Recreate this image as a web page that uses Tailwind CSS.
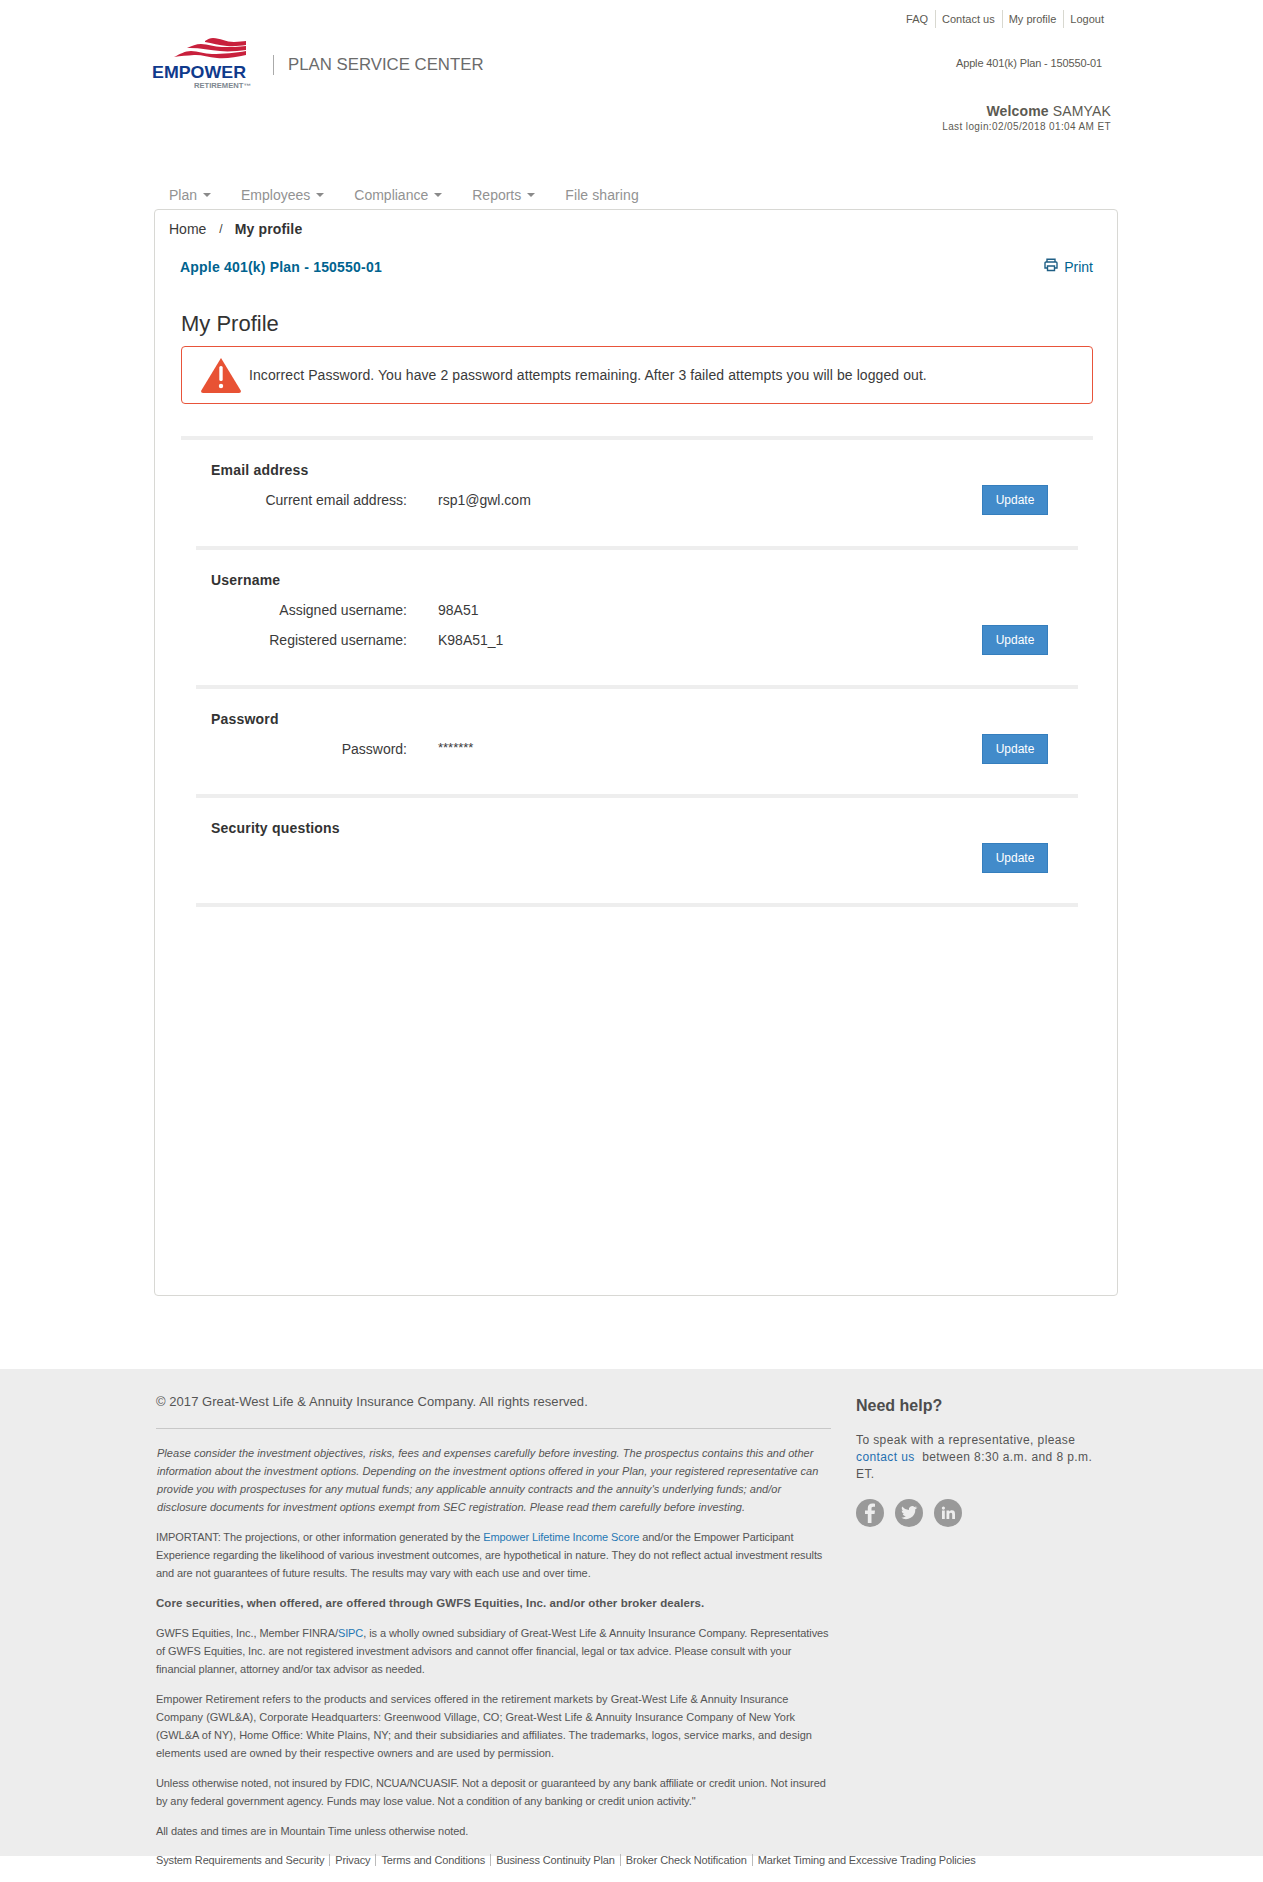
<!DOCTYPE html>
<html lang="en"><head><meta charset="utf-8"><title>My Profile</title>
<script src="https://cdn.jsdelivr.net/npm/@tailwindcss/browser@4"></script></head>
<body class="bg-white font-['Liberation_Sans',Arial,sans-serif] text-[14px] text-[#3a3a3a]">
<div class="h-[1882px] flex flex-col overflow-hidden">
<header class="ml-[152px] w-[960px] h-[188px] shrink-0">
  <div class="flex justify-end pt-[10px] pr-[8px] text-[11px] text-[#5c5a52] leading-[18px]">
    <a class="pr-[7px]">FAQ</a><a class="pl-[6px] pr-[7px] border-l border-[#d8d8d0]">Contact us</a><a class="pl-[6px] pr-[7px] border-l border-[#d8d8d0]">My profile</a><a class="pl-[6px] border-l border-[#d8d8d0]">Logout</a>
  </div>
  <div class="flex justify-between">
    <div class="flex items-start pt-[8px]">
      <svg width="100" height="56" viewBox="0 0 100 56">
        <path d="M53 5 C56 3 58 2 61 2 C68 2 74 6 82 6 C87 6 91 5 94 5 V9 C88 10 82 10.500 75 10 C67 9.500 60 7 53 6Z" fill="#c8203c"/>
        <path d="M35 12 C40 10 44 8 49 8 C56 8 62 11 70 11 C78 11 87 11 94 10 V14 C86 15 76 16 68 15 C58 14 46 11.500 35 12Z" fill="#c8203c"/>
        <path d="M22 21 C28 18 33 15 39 15 C46 15 52 18 60 18 C71 18 84 17 94 15 V19 C84 21 74 23 65 22 C56 21 49 18.500 42 19 C35 19.500 29 20 22 21Z" fill="#c8203c"/>
        <text x="0" y="42" font-family="Liberation Sans" font-weight="700" font-size="16.5" fill="#0f3a8c" textLength="94" lengthAdjust="spacingAndGlyphs">EMPOWER</text>
        <text x="42" y="52" font-family="Liberation Sans" font-weight="700" font-size="6.5" fill="#7d8790" textLength="57" lengthAdjust="spacingAndGlyphs">RETIREMENT™</text>
      </svg>
      <div class="ml-[21px] mt-[19px] h-[20px] border-l border-[#aaa]"></div>
      <div class="ml-[14px] mt-[17px] text-[16.8px] leading-[24px] text-[#6b6b6b]">PLAN SERVICE CENTER</div>
    </div>
    <div class="text-right pt-[28px] pr-[1px] text-[#5c5a52]">
      <div class="text-[11px] leading-[14px] pr-[9px] tracking-[-0.13px]">Apple 401(k) Plan - 150550-01</div>
      <div class="mt-[32px] text-[14px] leading-[18px] tracking-[0.15px]"><b>Welcome</b> SAMYAK</div>
      <div class="text-[10px] leading-[14px] tracking-[0.38px]">Last login:02/05/2018 01:04 AM ET</div>
    </div>
  </div>
</header>
<nav class="ml-[169px] flex gap-[30px] h-[21px] items-start text-[14px] leading-[14px] text-[#929292] shrink-0">
  <a class="flex items-center gap-[6px]">Plan<span class="border-x-[4px] border-x-transparent border-t-[4px] border-t-[#8a8a8a]"></span></a>
  <a class="flex items-center gap-[6px]">Employees<span class="border-x-[4px] border-x-transparent border-t-[4px] border-t-[#8a8a8a]"></span></a>
  <a class="flex items-center gap-[6px]">Compliance<span class="border-x-[4px] border-x-transparent border-t-[4px] border-t-[#8a8a8a]"></span></a>
  <a class="flex items-center gap-[6px]">Reports<span class="border-x-[4px] border-x-transparent border-t-[4px] border-t-[#8a8a8a]"></span></a>
  <a class="tracking-[0.1px]">File sharing</a>
</nav>
<main class="ml-[154px] w-[964px] h-[1087px] shrink-0 border border-[#d8d8d4] rounded-[4px] pl-[26px] pr-[24px]">
  <div class="-ml-[12px] flex items-center h-[38px] text-[14px]"><span>Home</span><span class="ml-[13px] mr-[12px] text-[12px]">/</span><b class="tracking-[0.15px] text-[#333]">My profile</b></div>
  <div class="flex justify-between items-center mt-[9px] h-[20px]">
    <b class="text-[#00638f] tracking-[0.2px] -ml-[1px]">Apple 401(k) Plan - 150550-01</b>
    <a class="flex items-center gap-[6px] text-[#00638f]">
      <svg width="14" height="14" viewBox="0 0 14 14" fill="none" stroke="#1f5f85" stroke-width="1.4" class="-mt-[4px]"><path d="M3 4V1.200h8V4M3 10H1V5a1 1 0 0 1 1-1h10a1 1 0 0 1 1 1v5h-2"/><path d="M3.500 8h7v4.500h-7z"/></svg>
      Print</a>
  </div>
  <h1 class="mt-[32px] text-[22px] leading-[30px] text-[#333]">My Profile</h1>
  <div class="mt-[7px] h-[58px] border border-[#e8543a] rounded-[4px] flex items-center pl-[18px] text-[14px] tracking-[0.08px]">
    <svg width="42" height="36" viewBox="0 0 42 36" class="mr-[7px]"><path d="M21 1 L41 34 Q41 36 39 36 H3 Q1 36 1 34Z" fill="#e85234"/><rect x="19.300" y="9" width="3.400" height="15" rx="1.500" fill="#fff"/><circle cx="21" cy="29" r="2.200" fill="#fff"/></svg>
    <span>Incorrect Password. You have 2 password attempts remaining. After 3 failed attempts you will be logged out.</span>
  </div>

  <div class="mt-[32px] h-[4px] bg-[#eeeeee]"></div>
  <section class="mx-[15px] px-[15px] h-[106px] relative">
    <h2 class="pt-[20px] font-bold leading-[20px] tracking-[0.2px] text-[#333]">Email address</h2>
    <div class="flex mt-[10px] leading-[20px]"><span class="w-[196px] text-right">Current email address:</span><span class="ml-[31px]">rsp1@gwl.com</span></div>
    <button class="absolute right-[30px] top-[45px] w-[66px] h-[30px] bg-[#428bca] border border-[#357ebd] text-white text-[12px]">Update</button>
  </section>
  <div class="mx-[15px] h-[4px] bg-[#eeeeee]"></div>
  <section class="mx-[15px] px-[15px] h-[135px] relative">
    <h2 class="pt-[20px] font-bold leading-[20px] tracking-[0.2px] text-[#333]">Username</h2>
    <div class="flex mt-[10px] leading-[20px]"><span class="w-[196px] text-right">Assigned username:</span><span class="ml-[31px]">98A51</span></div>
    <div class="flex mt-[10px] leading-[20px]"><span class="w-[196px] text-right">Registered username:</span><span class="ml-[31px]">K98A51_1</span></div>
    <button class="absolute right-[30px] top-[75px] w-[66px] h-[30px] bg-[#428bca] border border-[#357ebd] text-white text-[12px]">Update</button>
  </section>
  <div class="mx-[15px] h-[4px] bg-[#eeeeee]"></div>
  <section class="mx-[15px] px-[15px] h-[105px] relative">
    <h2 class="pt-[20px] font-bold leading-[20px] tracking-[0.2px] text-[#333]">Password</h2>
    <div class="flex mt-[10px] leading-[20px]"><span class="w-[196px] text-right">Password:</span><span class="ml-[31px] text-[13px] -mt-[1px]">*******</span></div>
    <button class="absolute right-[30px] top-[45px] w-[66px] h-[30px] bg-[#428bca] border border-[#357ebd] text-white text-[12px]">Update</button>
  </section>
  <div class="mx-[15px] h-[4px] bg-[#eeeeee]"></div>
  <section class="mx-[15px] px-[15px] h-[105px] relative">
    <h2 class="pt-[20px] font-bold leading-[20px] tracking-[0.2px] text-[#333]">Security questions</h2>
    <button class="absolute right-[30px] top-[45px] w-[66px] h-[30px] bg-[#428bca] border border-[#357ebd] text-white text-[12px]">Update</button>
  </section>
  <div class="mx-[15px] h-[4px] bg-[#eeeeee]"></div>
</main>
<footer class="mt-[73px] bg-[#ededed] h-[487px] shrink-0 pl-[156px] flex text-[#555]">
  <div class="w-[675px]">
    <p class="pt-[24px] text-[13px] leading-[18px] tracking-[0.05px]">© 2017 Great-West Life &amp; Annuity Insurance Company. All rights reserved.</p>
    <div class="mt-[17px] border-t border-[#c8c8c8]"></div>
    <div class="mt-[15px] text-[11px] leading-[18px] text-[#555] whitespace-nowrap">
      <p class="italic pl-[1px] tracking-[0.03px]">Please consider the investment objectives, risks, fees and expenses carefully before investing. The prospectus contains this and other<br>information about the investment options. Depending on the investment options offered in your Plan, your registered representative can<br>provide you with prospectuses for any mutual funds; any applicable annuity contracts and the annuity's underlying funds; and/or<br>disclosure documents for investment options exempt from SEC registration. Please read them carefully before investing.</p>
      <p class="mt-[12px] tracking-[-0.1px]">IMPORTANT: The projections, or other information generated by the <a class="text-[#1f78b4]">Empower Lifetime Income Score</a> and/or the Empower Participant<br>Experience regarding the likelihood of various investment outcomes, are hypothetical in nature. They do not reflect actual investment results<br>and are not guarantees of future results. The results may vary with each use and over time.</p>
      <p class="mt-[12px] font-bold text-[11.5px] tracking-[0.07px]">Core securities, when offered, are offered through GWFS Equities, Inc. and/or other broker dealers.</p>
      <p class="mt-[12px] tracking-[-0.08px]">GWFS Equities, Inc., Member FINRA/<a class="text-[#1f78b4]">SIPC</a>, is a wholly owned subsidiary of Great-West Life &amp; Annuity Insurance Company. Representatives<br>of GWFS Equities, Inc. are not registered investment advisors and cannot offer financial, legal or tax advice. Please consult with your<br>financial planner, attorney and/or tax advisor as needed.</p>
      <p class="mt-[12px]">Empower Retirement refers to the products and services offered in the retirement markets by Great-West Life &amp; Annuity Insurance<br>Company (GWL&amp;A), Corporate Headquarters: Greenwood Village, CO; Great-West Life &amp; Annuity Insurance Company of New York<br>(GWL&amp;A of NY), Home Office: White Plains, NY; and their subsidiaries and affiliates. The trademarks, logos, service marks, and design<br>elements used are owned by their respective owners and are used by permission.</p>
      <p class="mt-[12px] tracking-[-0.1px]">Unless otherwise noted, not insured by FDIC, NCUA/NCUASIF. Not a deposit or guaranteed by any bank affiliate or credit union. Not insured<br>by any federal government agency. Funds may lose value. Not a condition of any banking or credit union activity."</p>
      <p class="mt-[12px] tracking-[-0.08px]">All dates and times are in Mountain Time unless otherwise noted.</p>
    </div>
  </div>
  <aside class="ml-[25px] w-[260px]">
    <h3 class="pt-[26px] text-[16px] leading-[22px] font-bold text-[#4d4d4d]">Need help?</h3>
    <p class="mt-[15px] text-[12px] leading-[17px] tracking-[0.4px]">To speak with a representative, please<br><a class="text-[#1f6fb0]">contact us</a> &nbsp;between 8:30 a.m. and 8 p.m.<br>ET.</p>
    <div class="mt-[16px] flex gap-[11px]">
      <svg width="28" height="28" viewBox="0 0 28 28"><circle cx="14" cy="14" r="14" fill="#999"/><path d="M15.500 24v-9h3l.5-3.500h-3.500V9.500c0-1 .3-1.700 1.800-1.700H19V4.700c-.4 0-1.500-.2-2.700-.2-2.700 0-4.500 1.600-4.500 4.600v2.400H9V15h2.800v9z" fill="#ededed"/></svg>
      <svg width="28" height="28" viewBox="0 0 28 28"><circle cx="14" cy="14" r="14" fill="#999"/><path d="M22 8.500c-.6.3-1.200.4-1.900.5.700-.4 1.200-1 1.400-1.800-.6.400-1.300.6-2 .8a3.300 3.300 0 0 0-5.600 3c-2.700-.1-5.100-1.400-6.700-3.400-.9 1.500-.4 3.400 1 4.400-.5 0-1-.2-1.500-.4 0 1.600 1.100 3 2.600 3.300-.5.100-1 .1-1.500 0 .4 1.300 1.600 2.200 3.100 2.300a6.600 6.600 0 0 1-4.900 1.400 9.300 9.300 0 0 0 14.300-8.300c.9-.4 1.500-1 2.100-1.800z" fill="#ededed"/></svg>
      <svg width="28" height="28" viewBox="0 0 28 28"><circle cx="14" cy="14" r="14" fill="#999"/><path d="M8 11.500h2.800V20H8zM9.400 7.500a1.600 1.600 0 1 1 0 3.200 1.600 1.600 0 0 1 0-3.200zM12.500 11.500h2.700v1.200c.5-.8 1.400-1.400 2.700-1.400 2.500 0 3.100 1.600 3.100 3.900V20h-2.800v-4.300c0-1.100-.2-2-1.400-2-1.200 0-1.500.9-1.500 2V20h-2.800z" fill="#ededed"/></svg>
    </div>
  </aside>
</footer>
<div class="pl-[156px] text-[11px] leading-[12px] tracking-[-0.13px] -mt-[2px] text-[#555] flex">
  <a class="pr-[5px]">System Requirements and Security</a><a class="px-[5px] border-l border-[#bbb]">Privacy</a><a class="px-[5px] border-l border-[#bbb]">Terms and Conditions</a><a class="px-[5px] border-l border-[#bbb]">Business Continuity Plan</a><a class="px-[5px] border-l border-[#bbb]">Broker Check Notification</a><a class="px-[5px] border-l border-[#bbb]">Market Timing and Excessive Trading Policies</a>
</div>
</div>
</body></html>
